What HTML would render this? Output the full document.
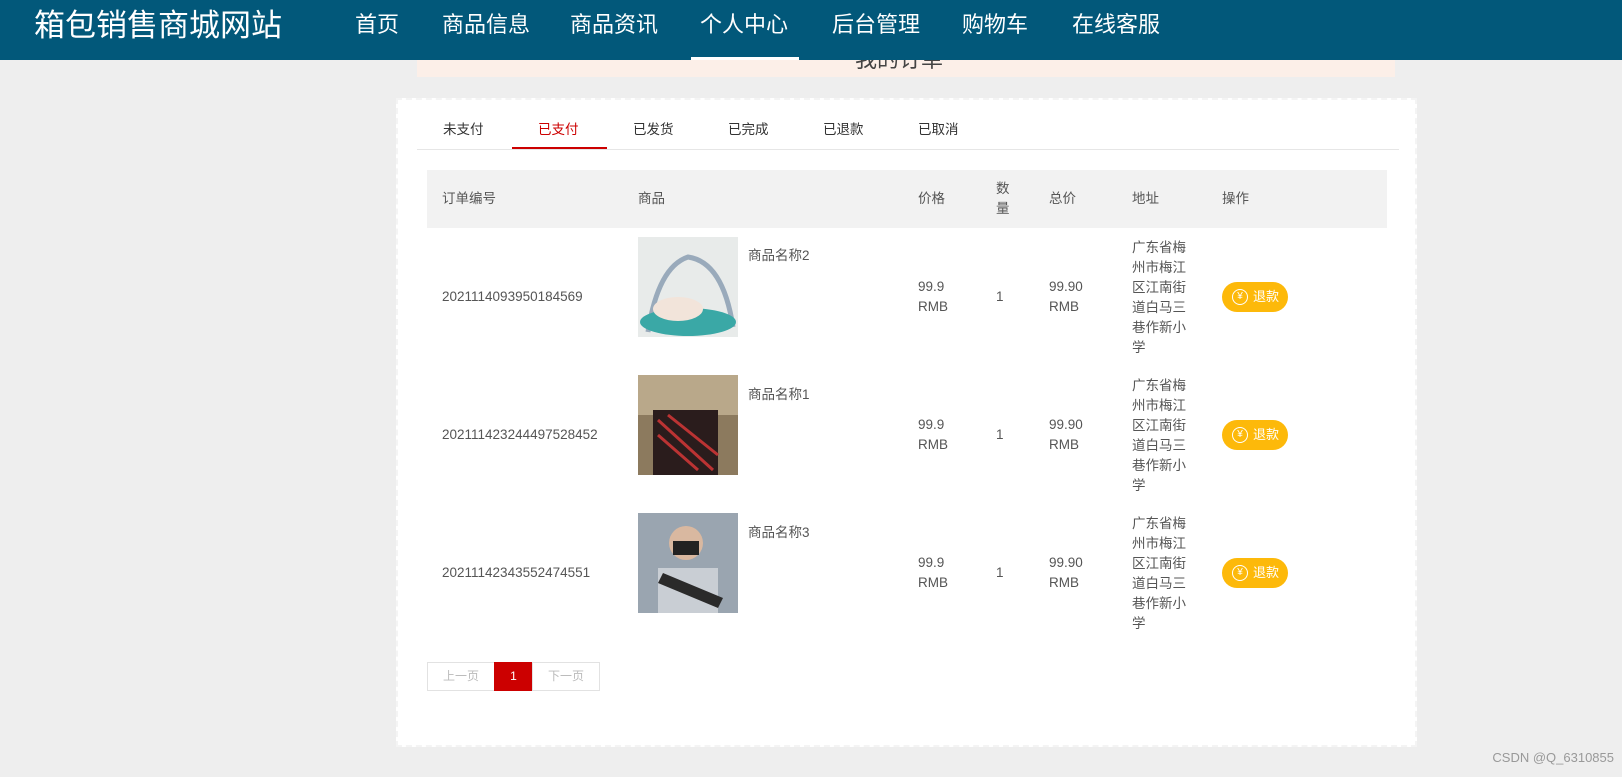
<!DOCTYPE html>
<html><head><meta charset="utf-8"><style>
*{margin:0;padding:0;box-sizing:border-box}
body{width:1622px;height:777px;background:#eeeeee;font-family:"Liberation Sans","Noto Sans CJK SC",sans-serif;position:relative;overflow:hidden;color:#555}
.hd{position:absolute;left:0;top:0;width:1622px;height:60px;background:#02587a;color:#fff;z-index:2}
.hd .t{position:absolute;left:34px;top:6px;font-size:31px;line-height:40px}
.hd .n{position:absolute;top:10px;font-size:22px;line-height:30px}
.ul{position:absolute;left:691px;top:57px;width:108px;height:3px;background:#fff}
.ban{position:absolute;left:417px;top:40px;width:978px;height:37px;background:#fcefe8;overflow:hidden}
.ban span{position:absolute;left:438px;top:2px;font-size:22px;color:#444}
.pn{position:absolute;left:396px;top:98px;width:1021px;height:649px;background:#fff;border:2px dashed #f4f4f4}
.a{position:absolute;font-size:13.5px;line-height:20px}
.tab{top:120px;color:#333}
.th{position:absolute;left:427px;top:170px;width:960px;height:58px;background:#f2f2f2}
.img{position:absolute;left:638px;width:100px;height:100px}
.btn{position:absolute;left:1222px;width:66px;height:30px;border-radius:15px;background:#fdb90a;color:#fff;font-size:13px;line-height:30px}
.btn i{position:absolute;left:10px;top:7px;width:16px;height:16px;border:1.5px solid #fff;border-radius:50%;font-style:normal;font-size:10px;line-height:13px;text-align:center}
.btn b{position:absolute;left:31px;font-weight:normal}
.pg{position:absolute;top:662px;height:29px;border:1px solid #e2e2e2;font-size:12px;line-height:27px;text-align:center;color:#bbb}
</style></head><body>
<div class="hd"><div class="t">箱包销售商城网站</div>
<div class="n" style="left:355px">首页</div><div class="n" style="left:442px">商品信息</div><div class="n" style="left:570px">商品资讯</div><div class="n" style="left:700px">个人中心</div><div class="n" style="left:832px">后台管理</div><div class="n" style="left:962px">购物车</div><div class="n" style="left:1072px">在线客服</div>
<div class="ul"></div></div>
<div class="ban"><span>我的订单</span></div>
<div class="pn"></div>
<div class="a tab" style="left:443px">未支付</div><div class="a tab" style="left:538px;color:#c00">已支付</div><div class="a tab" style="left:633px">已发货</div><div class="a tab" style="left:728px">已完成</div><div class="a tab" style="left:823px">已退款</div><div class="a tab" style="left:918px">已取消</div>
<div style="position:absolute;left:417px;top:149px;width:982px;height:1px;background:#e6e6e6"></div>
<div style="position:absolute;left:512px;top:147px;width:95px;height:2px;background:#c00"></div>
<div class="th"></div>
<div class="a" style="left:442px;top:189px">订单编号</div><div class="a" style="left:638px;top:189px">商品</div><div class="a" style="left:918px;top:189px">价格</div><div class="a" style="left:996px;top:179px">数<br>量</div><div class="a" style="left:1049px;top:189px">总价</div><div class="a" style="left:1132px;top:189px">地址</div><div class="a" style="left:1222px;top:189px">操作</div>

<div class="a" style="left:442px;top:287px">2021114093950184569</div>
<svg class="img" style="top:237px" viewBox="0 0 100 100"><rect width="100" height="100" fill="#e8ebea"/><path d="M10 95 Q20 30 50 20 Q85 25 95 90" stroke="#9ab" stroke-width="5" fill="none"/><ellipse cx="50" cy="85" rx="48" ry="14" fill="#3aa8a6"/><ellipse cx="40" cy="72" rx="25" ry="12" fill="#f2e4da"/></svg>
<div class="a" style="left:748px;top:246px">商品名称2</div>
<div class="a" style="left:918px;top:277px">99.9<br>RMB</div><div class="a" style="left:996px;top:287px">1</div><div class="a" style="left:1049px;top:277px">99.90<br>RMB</div>
<div class="a" style="left:1132px;top:238px;width:62px">广东省梅州市梅江区江南街道白马三巷作新小学</div>
<div class="btn" style="top:282px"><i>¥</i><b>退款</b></div>

<div class="a" style="left:442px;top:425px">202111423244497528452</div>
<svg class="img" style="top:375px" viewBox="0 0 100 100"><rect width="100" height="100" fill="#8c7a5e"/><rect x="0" y="0" width="100" height="40" fill="#b9a88a"/><rect x="15" y="35" width="65" height="65" fill="#2a1c1c"/><path d="M20 45 L75 95 M30 40 L80 80 M20 60 L60 95" stroke="#b33" stroke-width="3"/></svg>
<div class="a" style="left:748px;top:385px">商品名称1</div>
<div class="a" style="left:918px;top:415px">99.9<br>RMB</div><div class="a" style="left:996px;top:425px">1</div><div class="a" style="left:1049px;top:415px">99.90<br>RMB</div>
<div class="a" style="left:1132px;top:376px;width:62px">广东省梅州市梅江区江南街道白马三巷作新小学</div>
<div class="btn" style="top:420px"><i>¥</i><b>退款</b></div>

<div class="a" style="left:442px;top:563px">20211142343552474551</div>
<svg class="img" style="top:513px" viewBox="0 0 100 100"><rect width="100" height="100" fill="#9aa5b0"/><rect x="20" y="55" width="60" height="45" fill="#c9ced4"/><circle cx="48" cy="30" r="17" fill="#d9b8a0"/><rect x="35" y="28" width="26" height="14" fill="#222"/><path d="M25 60 L85 85 L80 95 L20 70Z" fill="#2a2a2a"/></svg>
<div class="a" style="left:748px;top:523px">商品名称3</div>
<div class="a" style="left:918px;top:553px">99.9<br>RMB</div><div class="a" style="left:996px;top:563px">1</div><div class="a" style="left:1049px;top:553px">99.90<br>RMB</div>
<div class="a" style="left:1132px;top:514px;width:62px">广东省梅州市梅江区江南街道白马三巷作新小学</div>
<div class="btn" style="top:558px"><i>¥</i><b>退款</b></div>

<div class="pg" style="left:427px;width:68px">上一页</div>
<div class="pg" style="left:494px;width:39px;background:#c00;border-color:#c00;color:#fff">1</div>
<div class="pg" style="left:532px;width:68px">下一页</div>
<div style="position:absolute;right:8px;top:750px;font-size:13px;color:#999">CSDN @Q_6310855</div>
</body></html>
